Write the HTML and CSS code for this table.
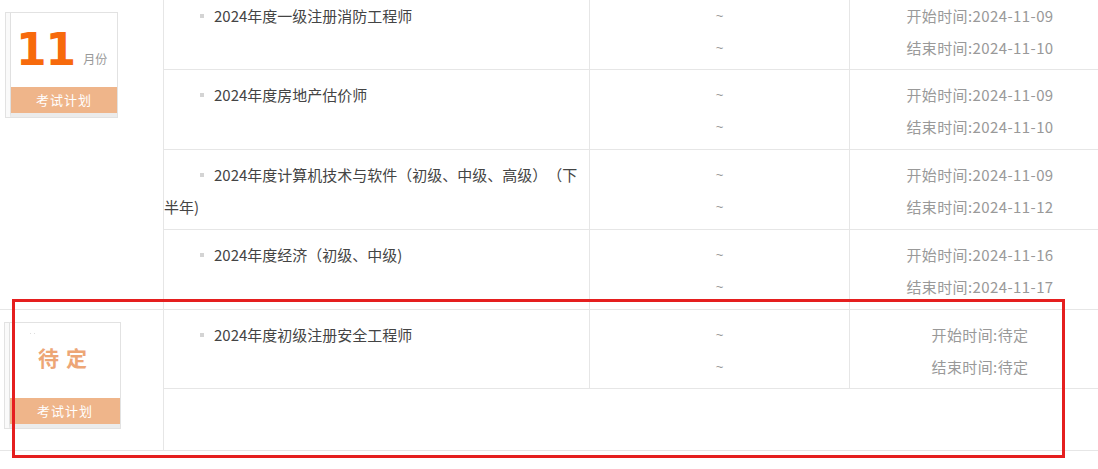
FILE: index.html
```html
<!DOCTYPE html>
<html lang="zh-CN">
<head>
<meta charset="utf-8">
<title>考试计划</title>
<link rel="stylesheet" href="styles.css">
</head>
<body>
<div class="plan">
  <section class="group">
    <div class="month-cell">
      <div class="badge badge-month">
        <div class="badge-inner">
          <div class="badge-top"><span class="num">11</span><span class="unit">月份</span></div>
          <div class="band">考试计划</div>
        </div>
      </div>
    </div>
    <div class="rows">
      <div class="row row-cut">
        <div class="name"><i class="dot"></i>2024年度一级注册消防工程师</div>
        <div class="sep"><span>~</span><span>~</span></div>
        <div class="date"><span>开始时间:2024-11-09</span><span>结束时间:2024-11-10</span></div>
      </div>
      <div class="row">
        <div class="name"><i class="dot"></i>2024年度房地产估价师</div>
        <div class="sep"><span>~</span><span>~</span></div>
        <div class="date"><span>开始时间:2024-11-09</span><span>结束时间:2024-11-10</span></div>
      </div>
      <div class="row">
        <div class="name"><i class="dot"></i>2024年度计算机技术与软件（初级、中级、高级）（下半年)</div>
        <div class="sep"><span>~</span><span>~</span></div>
        <div class="date"><span>开始时间:2024-11-09</span><span>结束时间:2024-11-12</span></div>
      </div>
      <div class="row row-last">
        <div class="name"><i class="dot"></i>2024年度经济（初级、中级)</div>
        <div class="sep"><span>~</span><span>~</span></div>
        <div class="date"><span>开始时间:2024-11-16</span><span>结束时间:2024-11-17</span></div>
      </div>
    </div>
  </section>
  <section class="group">
    <div class="month-cell">
      <div class="badge badge-tbd">
        <div class="badge-inner">
          <div class="badge-top tbd-top"><i class="specks"></i><span class="tbd">待定</span></div>
          <div class="band">考试计划</div>
        </div>
      </div>
    </div>
    <div class="rows">
      <div class="row row-short">
        <div class="name"><i class="dot"></i>2024年度初级注册安全工程师</div>
        <div class="sep"><span>~</span><span>~</span></div>
        <div class="date date-tbd"><span>开始时间:待定</span><span>结束时间:待定</span></div>
      </div>
      <div class="filler"></div>
    </div>
  </section>
  <div class="highlight"></div>
</div>
</body>
</html>
```
FILE: styles.css
```css
html, body {
  margin: 0;
  padding: 0;
  overflow: hidden;
  background: #fff;
}
html, body {
  height: 469px;
}
body {
  font-family: "Noto Sans CJK SC", "Noto Sans", sans-serif;
  font-size: 15px;
  color: #444;
  text-spacing-trim: space-all;
}
.plan {
  position: relative;
  width: 1110px;
}
.group {
  display: grid;
  grid-template-columns: 164px 946px;
  border-bottom: 1px solid #e6e6e6;
}
.month-cell {
  border-right: 1px solid #e6e6e6;
  padding: 12px 0 0 5px;
}
.badge {
  box-sizing: border-box;
  border: 1px solid #e2e2e2;
  padding-left: 4px;
  background: #fafafa;
}
.badge-month { width: 113px; height: 106px; }
.badge-tbd { width: 117px; height: 107px; margin-left: -1px; }
.badge-inner {
  height: 100%;
  box-sizing: border-box;
  border-left: 1px solid #e0e0e0;
  background: #fff;
  display: flex;
  flex-direction: column;
  border-bottom: 4px solid #ececec;
}
.badge-top {
  flex: 1;
  display: flex;
  align-items: flex-end;
  padding: 0 0 20px 5px;
}
.num {
  font-family: "DejaVu Sans", sans-serif;
  font-weight: bold;
  font-size: 44px;
  line-height: 34px;
  letter-spacing: -1px;
  color: #f76a0c;
}
.unit {
  font-size: 12px;
  color: #999;
  margin-left: 8px;
  line-height: 14px;
  padding-bottom: 1px;
}
.tbd-top {
  position: relative;
  justify-content: center;
  align-items: center;
  padding: 0 0 8px 0;
}
.tbd {
  font-size: 21px;
  font-weight: bold;
  color: #eda676;
  letter-spacing: 7px;
  margin-left: 2px;
}
.specks {
  position: absolute;
  left: 20px;
  top: 10px;
  width: 5px;
  height: 1px;
  border-left: 1px solid #ddd;
  border-right: 1px solid #ddd;
  box-sizing: border-box;
}
.band {
  height: 26px;
  background: #efb58a;
  color: #fff;
  font-size: 13px;
  line-height: 26px;
  text-align: center;
  letter-spacing: 1px;
}
.row {
  display: grid;
  grid-template-columns: 426px 260px 260px;
  height: 80px;
  box-sizing: border-box;
  border-bottom: 1px solid #e6e6e6;
}
.row > div {
  box-sizing: border-box;
  padding-top: 9px;
  line-height: 32px;
}
.row.row-cut { height: 70px; }
.row.row-cut > div { padding-top: 0; }
.row.row-last { height: 79px; border-bottom: none; }
.row.row-short { height: 79px; }
.name {
  text-indent: 36px;
  border-right: 1px solid #e6e6e6;
  color: #444;
}
.dot {
  display: inline-block;
  width: 4px;
  height: 4px;
  background: #d4d4d4;
  margin-right: 10px;
  vertical-align: 4px;
  text-indent: 0;
}
.sep {
  border-right: 1px solid #e6e6e6;
  display: flex;
  flex-direction: column;
  align-items: center;
  color: #999;
  font-family: "Liberation Sans", sans-serif;
  font-size: 13px;
}
.date {
  display: flex;
  flex-direction: column;
  align-items: center;
  color: #999;
  letter-spacing: 0.4px;
}
.filler { height: 61px; }
.highlight {
  position: absolute;
  left: 12px;
  top: 299px;
  width: 1053px;
  height: 159px;
  box-sizing: border-box;
  border: 3px solid #e51f1f;
}
```
